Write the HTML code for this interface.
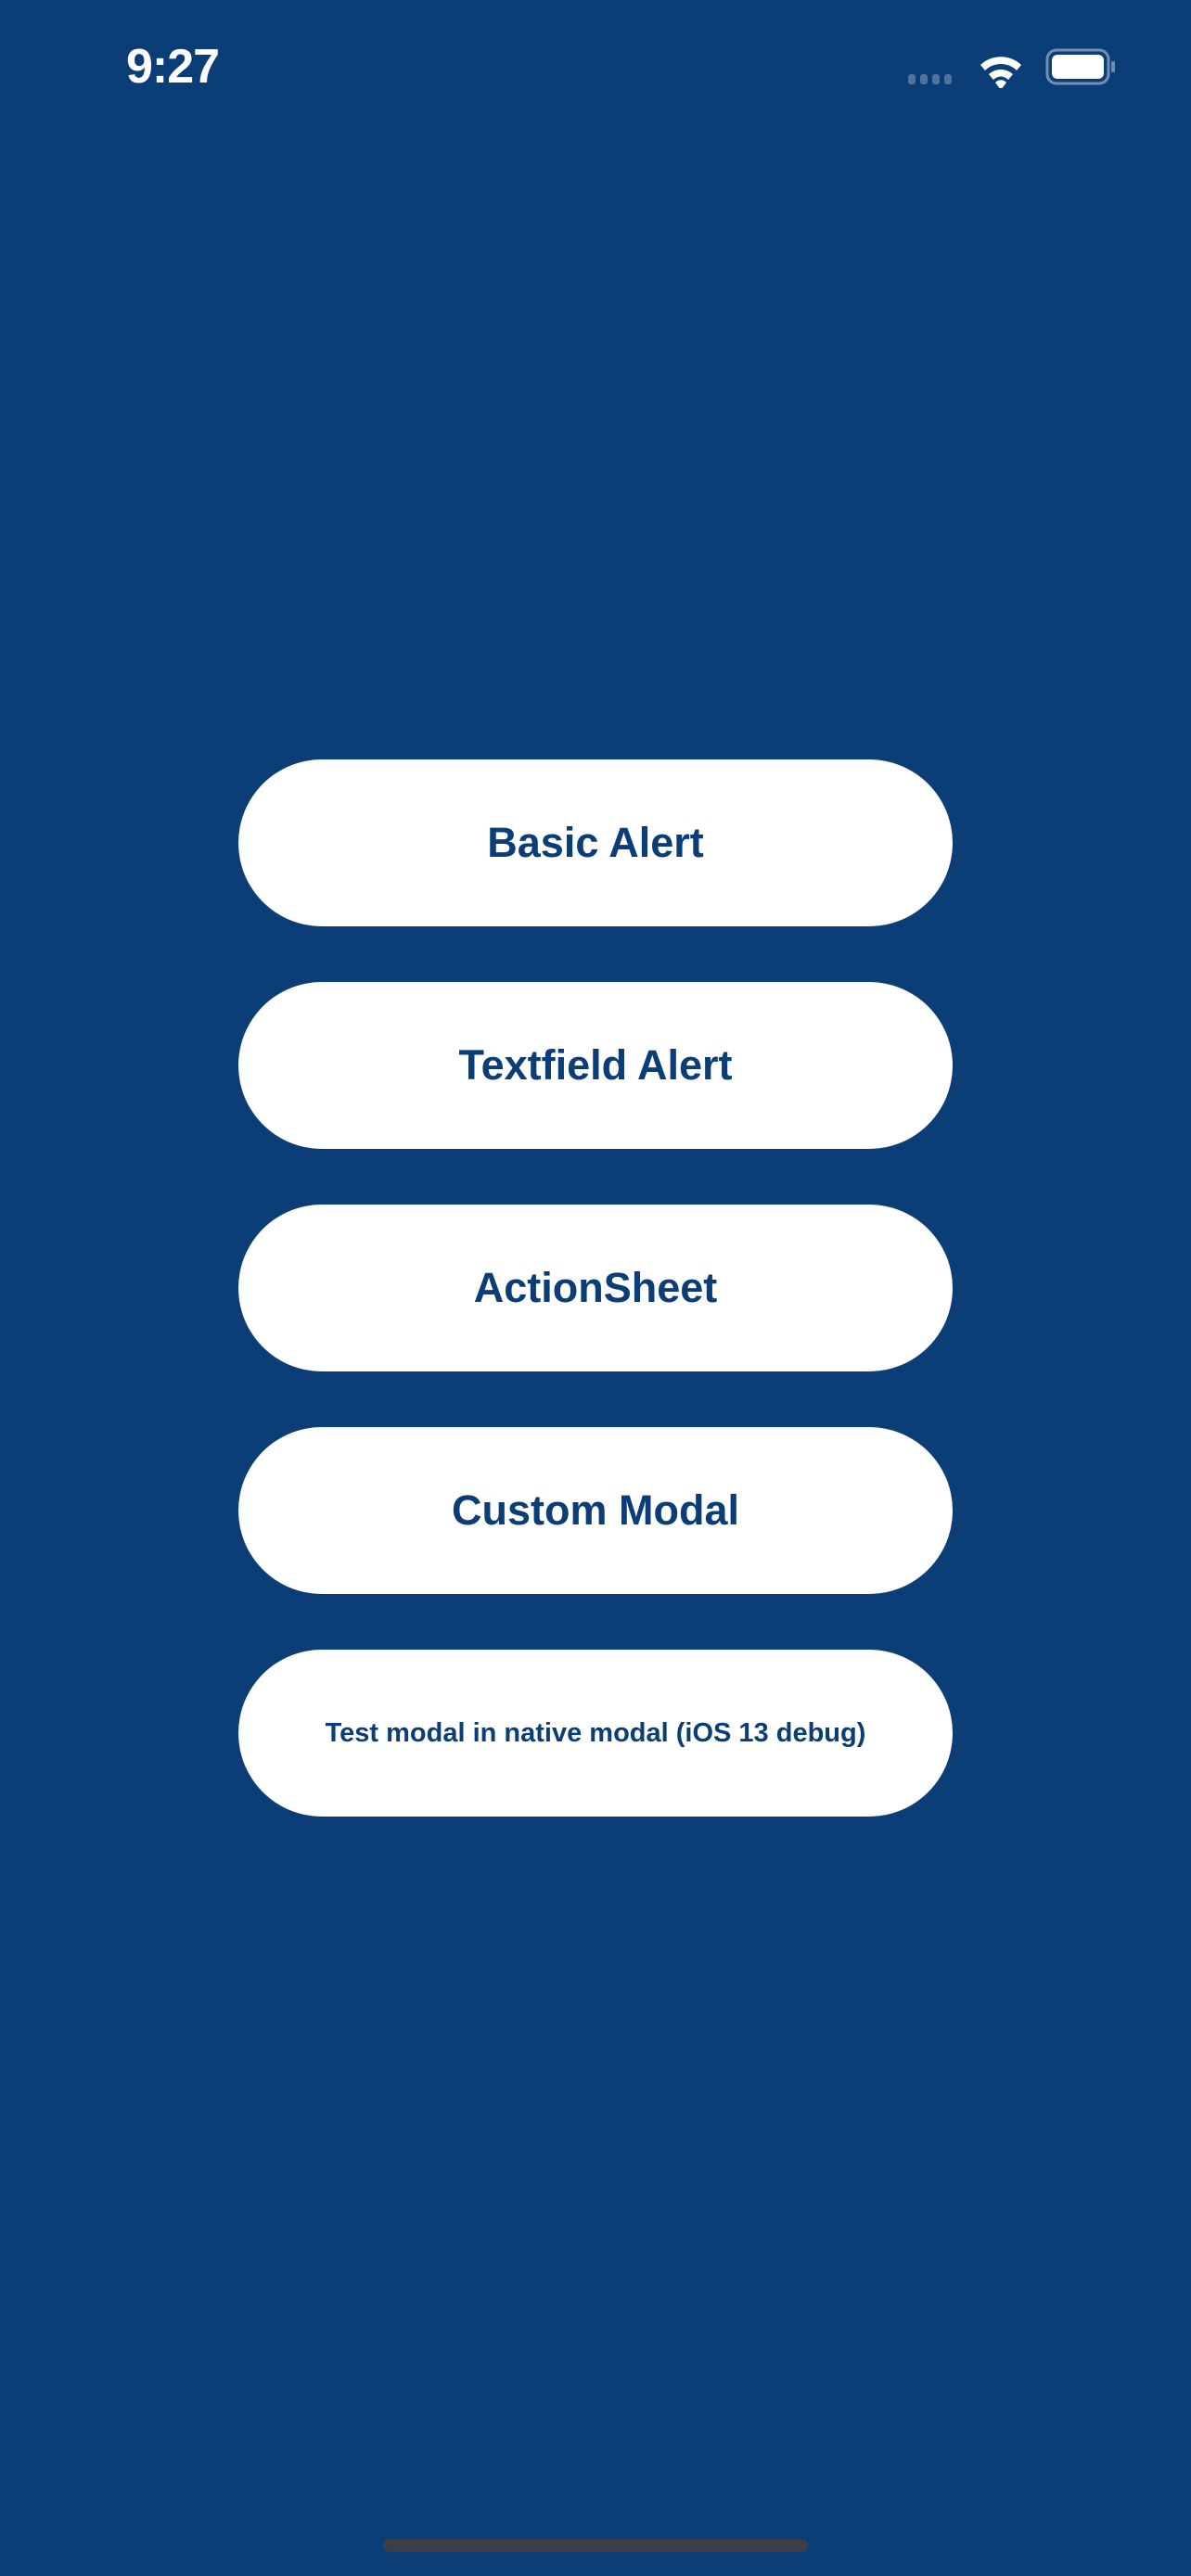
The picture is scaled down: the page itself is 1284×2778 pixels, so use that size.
<!DOCTYPE html>
<html><head><meta charset="utf-8"><style>
html,body{margin:0;padding:0;}
body{width:1284px;height:2778px;background:#0b3d77;position:relative;overflow:hidden;font-family:"Liberation Sans",sans-serif;}
.btn{position:absolute;left:257px;width:770px;height:180px;border-radius:90px;background:#fff;color:#0b3d77;font-weight:bold;display:flex;align-items:center;justify-content:center;font-size:45px;}
.time{position:absolute;left:136px;top:42px;color:#fff;font-size:52px;font-weight:bold;letter-spacing:-1px;}
.home{position:absolute;left:413px;top:2738px;width:458px;height:14px;border-radius:7px;background:#3b3f45;}
</style></head><body>
<div class="time">9:27</div>
<svg style="position:absolute;left:975px;top:50px" width="260" height="45" viewBox="0 0 260 45">
 <g fill="#4f739c">
  <rect x="4" y="30" width="8" height="11" rx="3"/><rect x="17" y="30" width="8" height="11" rx="3"/>
  <rect x="30" y="30" width="8" height="11" rx="3"/><rect x="43" y="30" width="8" height="11" rx="3"/>
 </g>
 <g fill="#fff">
  <path d="M82 20 A32 32 0 0 1 126 20 L121 26 A24 24 0 0 0 87 26 Z"/>
  <path d="M91 30 A19 19 0 0 1 117 30 L112 36 A11 11 0 0 0 96 36 Z"/>
  <path d="M98 39 A8 8 0 0 1 110 39 L104 47 Z"/>
 </g>
 <rect x="154" y="4" width="66" height="36" rx="10" fill="none" stroke="#6f8fb5" stroke-width="3"/>
 <rect x="159" y="9" width="56" height="26" rx="6" fill="#fff"/>
 <rect x="223" y="16" width="4" height="12" rx="2" fill="#6f8fb5"/>
</svg>
<div class="btn" style="top:819px">Basic Alert</div>
<div class="btn" style="top:1059px">Textfield Alert</div>
<div class="btn" style="top:1299px">ActionSheet</div>
<div class="btn" style="top:1539px">Custom Modal</div>
<div class="btn" style="top:1779px;font-size:29px">Test modal in native modal (iOS 13 debug)</div>
<div class="home"></div>
</body></html>
